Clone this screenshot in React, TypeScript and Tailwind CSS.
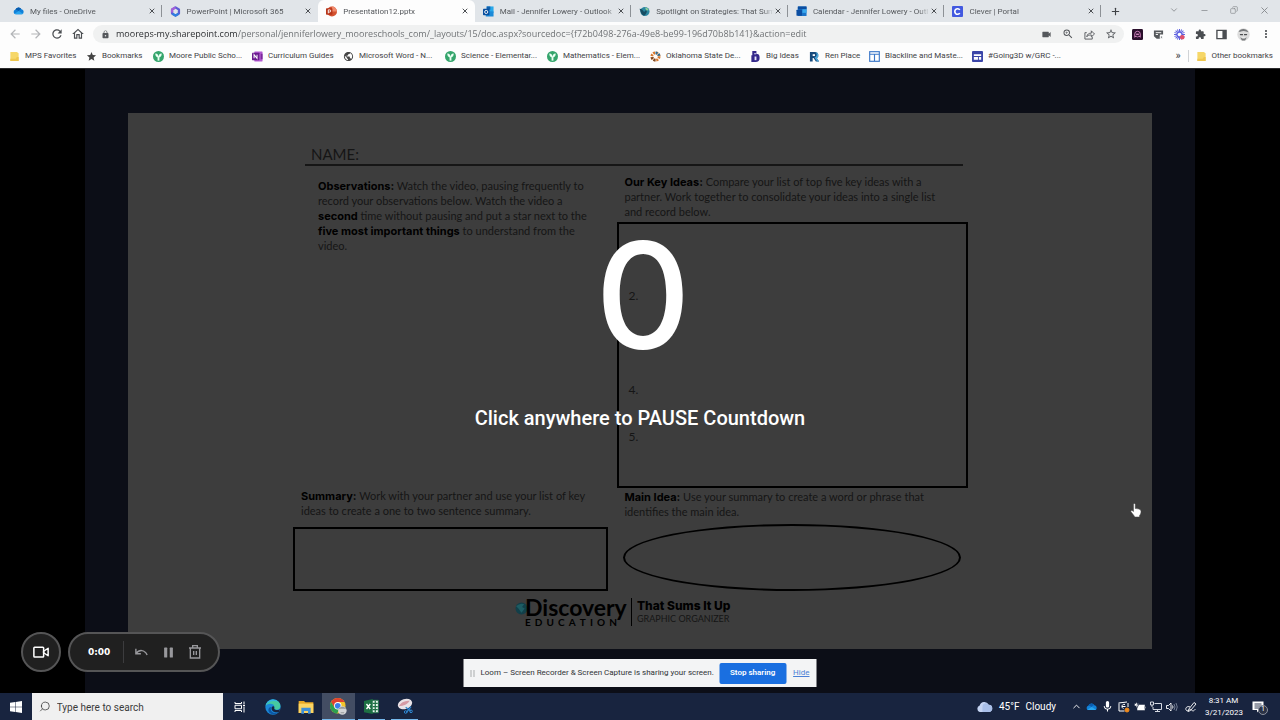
import React, { ReactNode } from "react";
import {
  MdArrowBack,
  MdArrowForward,
  MdRefresh,
  MdOutlineHome,
  MdLock,
  MdVideocam,
  MdZoomIn,
  MdStarBorder,
  MdStar,
  MdExtension,
  MdMoreVert,
  MdPublic,
  MdMic,
} from "react-icons/md";
import { ChevronDown, ChevronUp, Copy, Minus, Plus, Search, X } from "lucide-react";

const OneDrive = () => (
  <svg viewBox="0 0 24 16" className="w-full">
    <path d="M6 16a5 5 0 0 1-1-9.800A7.500 7.500 0 0 1 18.500 5 5.600 5.600 0 0 1 19 16z" fill="#1180d8" />
    <path d="M5 6.200A7.500 7.500 0 0 1 18.500 5c-3 0-4.500 1.500-6.500 3.500C9.500 6.800 7.500 6 5 6.200z" fill="#0a5cae" />
    <path d="M3 15l9.500-6.500L22 14.500a5 5 0 0 1-3 1.500H6a5 5 0 0 1-3-1z" fill="#29a5ee" />
  </svg>
);

const Office = () => (
  <svg viewBox="0 0 24 24" className="w-full">
    <path d="M12 3l7.500 4.500v9L12 21l-7.500-4.500v-9z" fill="none" stroke="#5b5fd6" strokeWidth="5" strokeLinejoin="round" />
    <path d="M4.500 14V7.500L12 3" fill="none" stroke="#a560d8" strokeWidth="5" strokeLinejoin="round" />
    <path d="M5.500 17l6.500 4 6.500-4" fill="none" stroke="#2f7fdf" strokeWidth="5" strokeLinejoin="round" />
  </svg>
);

const PowerPoint = () => (
  <svg viewBox="0 0 24 24" className="w-full">
    <circle cx="13" cy="12" r="11" fill="#d35230" />
    <path d="M13 1a11 11 0 0 1 11 11H13z" fill="#f08a6c" />
    <rect x="0" y="5" width="14" height="14" rx="1.500" fill="#b7351a" />
    <path d="M5 16V8.500h3a2.300 2.300 0 0 1 0 4.700H5" fill="none" stroke="#fff" strokeWidth="2" />
  </svg>
);

const Outlook = () => (
  <svg viewBox="0 0 24 24" className="w-full">
    <rect x="8" y="1" width="15" height="14" fill="#28a8ea" />
    <rect x="8" y="1" width="8" height="7" fill="#0f5fae" />
    <path d="M6 11l17 1v11H6z" fill="#1b8ad8" />
    <rect x="0" y="6" width="14" height="14" rx="1.500" fill="#0a4f9e" />
    <circle cx="7" cy="13" r="3.400" fill="none" stroke="#fff" strokeWidth="2" />
  </svg>
);

const Globe = () => (
  <svg viewBox="0 0 24 24" className="w-full">
    <circle cx="13" cy="12" r="10" fill="#2b86a0" />
    <path d="M1 6c5 0 8 3 10 7l6-6c1 6-1 11-6 14C5 20 4 12 1 6z" fill="#164d63" />
    <path d="M13 3c5 0 7 3 8 6l-5 1z" fill="#8ccf9a" />
  </svg>
);

const CalendarIcon = () => (
  <svg viewBox="0 0 24 24" className="w-full">
    <rect x="4" y="1" width="19" height="21" rx="1" fill="#1b74c9" />
    <path d="M4 1h19v6H4z" fill="#0b4da0" />
    <path d="M14 7h9v8h-9z" fill="#39a9ef" />
    <rect x="1" y="8" width="12" height="13" rx="1" fill="#0c4ea2" />
  </svg>
);

const Clever = () => (
  <svg viewBox="0 0 24 24" className="w-full">
    <rect width="24" height="24" rx="2" fill="#4259e0" />
    <path d="M17 8.500a6 6 0 1 0 0 7" fill="none" stroke="#fff" strokeWidth="3.500" />
  </svg>
);

const Folder = () => (
  <svg viewBox="0 0 24 24" className="w-full">
    <path d="M3 2h14l4 3v17H3z" fill="#f6d768" />
    <path d="M3 17h12l2-4h4v9H3z" fill="#eec64e" />
  </svg>
);

const Sprout = () => (
  <svg viewBox="0 0 24 24" className="w-full">
    <circle cx="12" cy="12" r="12" fill="#35a56c" />
    <path d="M12 21v-9" stroke="#e9fff2" strokeWidth="4" />
    <path d="M12 14C6.500 14 5 10 5 5.500c5 0 7 3.500 7 8.500zm0 0c0-5 2-8.500 7-8.500C19 10 17.500 14 12 14z" fill="#e9fff2" />
  </svg>
);

const OneNote = () => (
  <svg viewBox="0 0 24 24" className="w-full">
    <rect x="5" y="1" width="18" height="22" rx="1" fill="#b45ad2" />
    <rect x="19" y="6" width="4" height="12" fill="#7a2a9a" />
    <rect x="0" y="4" width="16" height="16" rx="1" fill="#6b1c8f" />
    <path d="M4.500 16V8l6.500 8V8" fill="none" stroke="#fff" strokeWidth="2.200" />
  </svg>
);

const Pinwheel = () => (
  <svg viewBox="0 0 24 24" className="w-full">
    <circle cx="12" cy="12" r="8" fill="none" stroke="#d9792e" strokeWidth="6" strokeDasharray="4.300 2" />
    <path d="M12 4a8 8 0 0 1 8 8" fill="none" stroke="#2f6f95" strokeWidth="6" strokeDasharray="4.300 2" />
    <path d="M12 20a8 8 0 0 1-8-8" fill="none" stroke="#7a4a2a" strokeWidth="6" strokeDasharray="4.300 2" />
  </svg>
);

const BigIdeas = () => (
  <svg viewBox="0 0 24 24" className="w-full">
    <path d="M5 0h9v7c5-1 7 2 7 8 0 6-3 9-9 9H3V9h2z" fill="#34288a" />
    <path d="M10 12h4v8h-4z" fill="#e8e6fa" />
    <circle cx="11" cy="6" r="1.800" fill="#e8e6fa" />
  </svg>
);

const RenPlace = () => (
  <svg viewBox="0 0 24 24" className="w-full">
    <path d="M2 2h12a7 7 0 0 1 3 13l5 8h-7l-5-8H8v8H2z" fill="#174a7c" />
    <path d="M14 2a7 7 0 0 1 3 13l5 8h-4l-6-9c6-2 6-8 2-12z" fill="#49a5d8" />
    <path d="M8 7h5v4H8z" fill="#fff" />
  </svg>
);

const Columns = () => (
  <svg viewBox="0 0 24 24" className="w-full">
    <rect x="1.500" y="1.500" width="21" height="21" fill="#fff" stroke="#3c78c8" strokeWidth="2.500" />
    <path d="M2 7h20M12 7v15" stroke="#3c78c8" strokeWidth="2.500" />
  </svg>
);

const Sites = () => (
  <svg viewBox="0 0 24 24" className="w-full">
    <rect width="24" height="24" rx="2" fill="#3b45a8" />
    <path d="M4 7h16v4H4zM4 13h9v6H4zM15 13h5v6h-5z" fill="#fff" />
  </svg>
);

type TabData = { title: string; icon: ReactNode; active?: boolean; divider?: boolean };

const tabs: TabData[] = [
  { title: "My files - OneDrive", icon: <OneDrive />, divider: true },
  { title: "PowerPoint | Microsoft 365", icon: <Office /> },
  { title: "Presentation12.pptx", icon: <PowerPoint />, active: true },
  { title: "Mail - Jennifer Lowery - Outlook", icon: <Outlook />, divider: true },
  { title: "Spotlight on Strategies: That Sum", icon: <Globe />, divider: true },
  { title: "Calendar - Jennifer Lowery - Outl", icon: <CalendarIcon />, divider: true },
  { title: "Clever | Portal", icon: <Clever />, divider: true },
];

const bookmarks: { label: string; icon: ReactNode; width: string }[] = [
  { label: "MPS Favorites", icon: <Folder />, width: "w-[77px]" },
  { label: "Bookmarks", icon: <MdStar className="size-full text-[#454545]" />, width: "w-[67px]" },
  { label: "Moore Public Scho...", icon: <Sprout />, width: "w-[99px]" },
  { label: "Curriculum Guides", icon: <OneNote />, width: "w-[91px]" },
  { label: "Microsoft Word - N...", icon: <MdPublic className="size-full text-[#454545]" />, width: "w-[102px]" },
  { label: "Science - Elementar...", icon: <Sprout />, width: "w-[102px]" },
  { label: "Mathematics - Elem...", icon: <Sprout />, width: "w-[103px]" },
  { label: "Oklahoma State De...", icon: <Pinwheel />, width: "w-[100px]" },
  { label: "Big Ideas", icon: <BigIdeas />, width: "w-[59px]" },
  { label: "Ren Place", icon: <RenPlace />, width: "w-[60px]" },
  { label: "Blackline and Maste...", icon: <Columns />, width: "w-[103px]" },
  { label: "#Going3D w/GRC -...", icon: <Sites />, width: "w-[100px]" },
];

function TabStrip() {
  return (
    <div className="flex h-[22px] bg-[#e1e5e9] pl-[5px]">
      <div role="tablist" className="flex min-w-0 flex-1">
        {tabs.map((t) => (
          <div
            key={t.title}
            className={
              t.active
                ? "flex min-w-0 flex-1 items-center rounded-t-md bg-[#fdfdfd] pl-[8px]"
                : "flex min-w-0 flex-1 items-center pl-[8px]"
            }
          >
            <button role="tab" aria-selected={!!t.active} className="flex min-w-0 flex-1 items-center gap-[6px]">
              <span className="flex w-[11px] shrink-0 items-center">{t.icon}</span>
              <span className="min-w-0 flex-1 overflow-hidden mask-r-from-90% pt-px text-left text-[8px] whitespace-nowrap text-[#55585c]">
                {t.title}
              </span>
            </button>
            <button aria-label={"Close " + t.title} className="shrink-0 text-[#4c4f53]">
              <X size={8} strokeWidth={3} />
            </button>
            <span className={t.divider ? "ml-[5px] h-3 w-px bg-[#8d9196]" : "ml-[5px] h-3 w-px"} />
          </div>
        ))}
      </div>
      <div className="flex w-[179px] items-center pr-[10px] pl-[9px] text-[#85898d]">
        <button aria-label="New tab" className="text-[#3f4246]">
          <Plus size={11} strokeWidth={2.5} />
        </button>
        <div className="ml-auto flex items-center gap-[21px] pb-[2px]">
          <button aria-label="Search tabs">
            <ChevronDown size={10} />
          </button>
          <button aria-label="Minimize">
            <Minus size={9} />
          </button>
          <button aria-label="Restore">
            <Copy size={8} className="-scale-x-100" />
          </button>
          <button aria-label="Close window">
            <X size={11} />
          </button>
        </div>
      </div>
    </div>
  );
}

function Toolbar() {
  return (
    <div className="flex h-6 items-center bg-[#fdfdfd] pr-[8px] pl-[8px]">
      <div className="flex gap-[7px] text-[#4b4e52]">
        <button aria-label="Back" className="text-[#b3b5b8]"><MdArrowBack size={14} /></button>
        <button aria-label="Forward" className="text-[#b3b5b8]"><MdArrowForward size={14} /></button>
        <button aria-label="Reload"><MdRefresh size={14} /></button>
        <button aria-label="Home"><MdOutlineHome size={14} /></button>
      </div>
      <div className="ml-[8px] flex h-[18px] flex-1 items-center rounded-full bg-[#f0f1f1] pr-[7px] pl-[8px] text-[#55585c]">
        <MdLock size={9} />
        <input
          aria-label="Address"
          readOnly
          value="mooreps-my.sharepoint.com/personal/jenniferlowery_mooreschools_com/_layouts/15/doc.aspx?sourcedoc={f72b0498-276a-49e8-be99-196d70b8b141}&action=edit"
          className="ml-[6px] min-w-0 flex-1 bg-[linear-gradient(to_right,#26282b_121px,#6a6d70_121px)] bg-clip-text font-['Open_Sans',sans-serif] text-[9px] text-transparent outline-none"
        />
        <div className="flex gap-[10px]">
          <button aria-label="Camera"><MdVideocam size={11} /></button>
          <button aria-label="Zoom"><MdZoomIn size={12} /></button>
          <button aria-label="Share">
            <svg viewBox="0 0 24 24" width="11" height="11" fill="none" stroke="currentColor" strokeWidth="2">
              <path d="M6 8H2v14h16v-5M6 17c1-6 5-8 10-8V4l7 7-7 6v-4c-5 0-8 1-10 4z" />
            </svg>
          </button>
          <button aria-label="Bookmark this page"><MdStarBorder size={12} /></button>
        </div>
      </div>
      <div className="ml-[8px] flex items-center gap-[10px] text-[#4b4e52]">
        <button aria-label="Kami">
          <svg viewBox="0 0 24 24" width="11" height="11">
            <rect width="24" height="24" rx="3" fill="#2b0f2c" />
            <path d="M6 18V11a6 6 0 0 1 12 0v7l-3-3-3 3-3-3z" fill="none" stroke="#d887c4" strokeWidth="2" />
            <path d="M9 10h6v3H9z" fill="#d887c4" />
          </svg>
        </button>
        <button aria-label="Reader">
          <svg viewBox="0 0 24 24" width="11" height="11">
            <path d="M2 3h20v9h-7v9H8L2 16z" fill="#56595c" />
            <path d="M6 8h12M6 12h5M16 15h5v6h-5z" stroke="#fff" strokeWidth="2" fill="#8d9093" />
          </svg>
        </button>
        <button aria-label="Loom">
          <svg viewBox="0 0 24 24" width="11" height="11">
            <path d="M12 0v24M0 12h24M3.500 3.500l17 17M20.500 3.500l-17 17M7.400 1l9.200 22M1 7.400l22 9.200M16.600 1L7.400 23M1 16.600l22-9.200" stroke="#5f62e0" strokeWidth="2.200" />
            <circle cx="12" cy="12" r="4" fill="#fff" />
            <circle cx="18" cy="18" r="5" fill="#e0506a" />
          </svg>
        </button>
        <button aria-label="Extensions"><MdExtension size={11} /></button>
        <button aria-label="Side panel">
          <svg viewBox="0 0 24 24" width="11" height="11">
            <path d="M2 3h20v18H2z" fill="none" stroke="currentColor" strokeWidth="3" />
            <path d="M14 3h8v18h-8z" fill="currentColor" />
          </svg>
        </button>
        <button aria-label="Profile">
          <svg viewBox="0 0 24 24" width="13" height="13">
            <circle cx="12" cy="12" r="11.500" fill="#dcdcdc" />
            <path d="M3 7C6 0 18 0 21 8l-3-1c-4-2-8-2-12 0z" fill="#77797b" />
            <path d="M5 11h6v2.500H6zM13 11h6l-1 2.500h-5z" fill="#4b4d4f" />
            <path d="M6 17c4 3 8 3 12 0l-3 6H9z" fill="#77797b" />
            <path d="M9 18h6" stroke="#f4f4f4" strokeWidth="1.500" />
          </svg>
        </button>
        <button aria-label="Menu"><MdMoreVert size={12} /></button>
      </div>
    </div>
  );
}

function BookmarkBar() {
  return (
    <nav aria-label="Bookmarks" className="flex h-[22px] items-center bg-[#fdfdfd] pr-[7px] pb-[2px] pl-[9px] text-[8px] whitespace-nowrap text-[#3f4246]">
      {bookmarks.map((b) => (
        <a key={b.label} href="#" className={"flex shrink-0 items-center gap-[5px] " + b.width}>
          <span className="flex size-[11px] shrink-0 items-center">{b.icon}</span>
          {b.label}
        </a>
      ))}
      <div className="ml-auto flex items-center">
        <button aria-label="More bookmarks" className="text-[11px]">»</button>
        <span className="mr-[7px] ml-[7px] h-3 w-px bg-[#d0d3d6]" />
        <a href="#" className="flex items-center gap-[5px]">
          <span className="flex size-[11px]"><Folder /></span>
          Other bookmarks
        </a>
      </div>
    </nav>
  );
}

const Lead = ({ children }: { children: ReactNode }) => (
  <b className="font-['Inter',sans-serif] leading-none font-bold text-black">{children}</b>
);

function Slide() {
  return (
    <section className="flex flex-1 flex-col bg-[#3d3d3d] pr-[184px] pl-[165px] font-['Lato',sans-serif] text-[11px] leading-[15px] text-[#151515]">
      <h1 className="mt-[31px] mr-[5px] ml-3 border-b-2 border-[#161616] pl-[6px] text-[15px] leading-5">NAME:</h1>
      <div className="grid grid-cols-[315fr_350fr] gap-x-[9px]">
        <p className="pt-3 pr-2 pl-[25px]">
          <Lead>Observations:</Lead> Watch the video, pausing frequently to
          <br />
          record your observations below. Watch the video a
          <br />
          <Lead>second</Lead> time without pausing and put a star next to the
          <br />
          <Lead>five most important things</Lead> to understand from the
          <br />
          video.
        </p>
        <div className="pt-2">
          <p className="pb-[3px] pl-[7px]">
            <Lead>Our Key Ideas:</Lead> Compare your list of top five key ideas with a
            <br />
            partner. Work together to consolidate your ideas into a single list
            <br />
            and record below.
          </p>
          <ol className="h-[266px] border-2 border-black pt-12 pl-[9px] text-[12px] leading-[47px]">
            <li className="mb-[47px]">2.</li>
            <li>4.</li>
            <li>5.</li>
          </ol>
        </div>
        <div>
          <p className="pl-2">
            <Lead>Summary:</Lead> Work with your partner and use your list of key
            <br />
            ideas to create a one to two sentence summary.
          </p>
          <div className="mt-[9px] h-[64px] border-2 border-black" />
        </div>
        <div className="pt-[1px] pr-[7px] pl-[6px]">
          <p className="pl-[1px]">
            <Lead>Main Idea:</Lead> Use your summary to create a word or phrase that
            <br />
            identifies the main idea.
          </p>
          <div className="mt-[5px] h-[67px] rounded-[50%] border-2 border-black" />
        </div>
      </div>
      <footer className="mt-[6px] ml-[222px] flex items-center">
        <svg viewBox="0 0 24 24" className="-mr-[3px] mb-2 size-[13px] shrink-0">
          <circle cx="12" cy="12" r="11" fill="#123f49" />
          <path d="M2 8c5-5 11-6 15-4l-4 5 5 3-6 8C8 16 8 12 2 8z" fill="#1d5c63" />
        </svg>
        <div className="w-[106px] text-black">
          <div className="text-[23px] leading-[20px] font-bold">Discovery</div>
          <div className="flex justify-between pr-[14px] text-[10px] leading-[10px] font-bold">
            {"EDUCATION".split("").map((c, i) => (
              <span key={i}>{c}</span>
            ))}
          </div>
        </div>
        <span className="h-7 w-px bg-black" />
        <div className="pl-[5px]">
          <div className="font-['Inter',sans-serif] text-[12px] leading-[14px] font-extrabold text-black">That Sums It Up</div>
          <div className="text-[9px] leading-[12px]">GRAPHIC ORGANIZER</div>
        </div>
      </footer>
    </section>
  );
}

function RecorderControls() {
  return (
    <div className="absolute bottom-[21px] left-[21px] flex gap-[7px]">
      <button aria-label="Camera" className="flex size-10 items-center justify-center rounded-full border-2 border-[#555556] bg-[#202020] text-white">
        <svg viewBox="0 0 24 24" width="18" height="18" fill="none" stroke="currentColor" strokeWidth="2">
          <rect x="2.500" y="5.500" width="13" height="13" rx="1" />
          <path d="M15.500 11l6-4v10l-6-4z" strokeLinejoin="round" />
        </svg>
      </button>
      <div className="flex h-10 w-[152px] items-center rounded-full border-2 border-[#555556] bg-[#202020] pl-[18px] text-[#98989c]">
        <span className="w-[35px] pt-[2px] font-['DejaVu_Sans',sans-serif] text-[9px] font-bold text-white">0:00</span>
        <span className="h-[22px] w-px bg-[#3c3c3e]" />
        <button aria-label="Restart" className="ml-[10px]">
          <svg viewBox="0 0 24 24" width="15" height="15" fill="none" stroke="currentColor" strokeWidth="2.200">
            <path d="M3 6v8h8M3.500 13.500C8 7 17 7 21 16" />
          </svg>
        </button>
        <button aria-label="Pause" className="ml-[12px]">
          <svg viewBox="0 0 24 24" width="15" height="15" fill="currentColor">
            <rect x="5" y="4" width="5" height="16" rx="1" />
            <rect x="14" y="4" width="5" height="16" rx="1" />
          </svg>
        </button>
        <button aria-label="Delete" className="ml-[11px]">
          <svg viewBox="0 0 24 24" width="16" height="16" fill="none" stroke="currentColor" strokeWidth="2">
            <path d="M3 6h18M8.500 6V2.500h7V6M5 6v15h14V6M10 10.500v6M14 10.500v6" />
          </svg>
        </button>
      </div>
    </div>
  );
}

function SharingBar() {
  return (
    <div className="absolute bottom-[6px] left-1/2 flex h-7 w-[353px] -translate-x-1/2 items-center bg-[#f3f4f5] pr-[7px] pl-[7px] text-[8px] whitespace-nowrap text-[#303336]">
      <span className="h-[7px] w-[4px] border-x border-[#a9abad]" />
      <span className="ml-[6px] flex-1">Loom – Screen Recorder &amp; Screen Capture is sharing your screen.</span>
      <button className="h-[21px] w-[67px] rounded-xs bg-[#1a6fe0] font-semibold text-white">Stop sharing</button>
      <a href="#" className="ml-[7px] text-[#4a7fd6] underline">Hide</a>
    </div>
  );
}

function Stage() {
  return (
    <main className="relative flex flex-1 border-t border-[#2b2b2d] bg-black px-[85px]">
      <div className="flex flex-1 flex-col bg-[#0c0e17] px-[43px] pt-11 pb-11">
        <Slide />
      </div>
      <button className="absolute inset-0 flex flex-col items-center pt-[153px] text-white">
        <span className="pl-[6px] font-['Inter',sans-serif] text-[148px] leading-[148px] font-medium">0</span>
        <span className="mt-[36px] font-['Roboto',sans-serif] text-[20px] leading-6 font-medium">
          Click anywhere to PAUSE Countdown
        </span>
      </button>
      <RecorderControls />
      <SharingBar />
      <svg viewBox="0 0 24 30" className="absolute top-[434px] right-[138px] h-[15px] w-3">
        <path
          d="M7 2.500C7 .5 10.500.5 10.500 2.500V11c4 .3 11 1 11.500 5 .2 4-1 7-3 9v3H9.500C8 24 3 20 1.500 16.500c0-2 3-2 5.500.5z"
          fill="#fff"
          stroke="#444"
          strokeWidth="1"
        />
      </svg>
    </main>
  );
}

function TaskButton({ label, active, running, children }: { label: string; active?: boolean; running?: boolean; children: ReactNode }) {
  return (
    <button
      aria-label={label}
      className={
        active
          ? "flex w-[33px] items-center justify-center border-b border-[#76b9ed] bg-[#434d63]"
          : running
            ? "flex w-[33px] items-center justify-center px-[3px]"
            : "flex w-[33px] items-center justify-center"
      }
    >
      {running ? (
        <span className="flex h-full flex-1 items-center justify-center border-b border-[#76b9ed]">{children}</span>
      ) : (
        children
      )}
    </button>
  );
}

function Taskbar() {
  return (
    <footer className="flex h-[27px] bg-[#18243f] text-white">
      <button aria-label="Start" className="flex w-8 items-center justify-center">
        <svg viewBox="0 0 24 24" width="12" height="12" fill="#fff">
          <path d="M0 3.500l10.500-1.500v9.500H0zM11.500 1.900L24 0v11.500H11.500zM0 12.500h10.500V22L0 20.500zM11.500 12.500H24V24l-12.500-1.800z" />
        </svg>
      </button>
      <label className="flex w-[191px] items-center bg-[#f0f0f0] pl-[7px] text-[#333]">
        <Search size={13} strokeWidth={1.5} className="-scale-x-100" />
        <input
          aria-label="Search"
          placeholder="Type here to search"
          className="ml-[6px] w-full min-w-0 pt-px text-[10px] outline-none placeholder:text-[#3b3b3b]"
        />
      </label>
      <TaskButton label="Task view">
        <svg viewBox="0 0 24 24" width="12" height="12" fill="none" stroke="#fff" strokeWidth="2">
          <path d="M2 2v3h13V2M2 22v-3h13v3M2 8.500h13v7H2zM20 1v6M20 11v12M18 9h4" />
        </svg>
      </TaskButton>
      <TaskButton label="Edge">
        <svg viewBox="0 0 24 24" width="16" height="16">
          <circle cx="12" cy="12" r="11.500" fill="#1b88d8" />
          <path d="M1 10C3 1 15-2 21 5c4 5 2 11-4 11-4 0-3-2-3-4 0-6-9-6-13-2z" fill="#46c9a0" />
          <path d="M1 10C3 1 14-2 20 4c-6-2-15-1-19 6z" fill="#35b4e0" />
          <path d="M9 12c-2 6 3 11 11 8-5 5-14 4-15-3 0-4 2-5 4-5z" fill="#0c57a4" />
          <path d="M14 12c0 2-1 4 3 4.500 3 .3 5-1 6-2l-2 5c-8 2-12-2-11-7 1-2 4-2 4-.5z" fill="#18243f" />
        </svg>
      </TaskButton>
      <TaskButton label="File Explorer">
        <svg viewBox="0 0 24 24" width="16" height="16">
          <path d="M1 3h8l2 2h12v16H1z" fill="#e9a926" />
          <path d="M1 7h22v14H1z" fill="#fcd462" />
          <path d="M5 13h14v9h-4v-4H9v4H5z" fill="#3f8fd6" />
        </svg>
      </TaskButton>
      <TaskButton label="Chrome" active>
        <svg viewBox="0 0 24 24" width="17" height="17">
          <circle cx="11" cy="11" r="11" fill="#f5c42c" />
          <path d="M1.500 5.500A11 11 0 0 1 20.500 5.500H11L6 13z" fill="#e0412f" />
          <path d="M1.500 5.500A11 11 0 0 0 10 22l5-9-4 3-5-3z" fill="#2ea04f" />
          <circle cx="11" cy="11" r="5.200" fill="#fff" />
          <circle cx="11" cy="11" r="4" fill="#3b7ee8" />
          <circle cx="17.500" cy="17.500" r="6" fill="#d3d5d7" />
          <path d="M12 16c2-5 9-5 11 0l-3-1h-5zM15 20h5v1.500h-5z" fill="#96999c" />
        </svg>
      </TaskButton>
      <TaskButton label="Excel" running>
        <svg viewBox="0 0 24 24" width="15" height="15">
          <path d="M12 2h11v20H12z" fill="#e9f5ee" stroke="#1d7044" strokeWidth="1.500" />
          <path d="M14 7h8M14 12h8M14 17h8M18 3v18" stroke="#1d7044" strokeWidth="2" />
          <path d="M0 3l14-3v24L0 21z" fill="#1d7044" />
          <path d="M4 8l6 8M10 8l-6 8" stroke="#fff" strokeWidth="2.200" />
        </svg>
      </TaskButton>
      <TaskButton label="Snipping Tool" running>
        <svg viewBox="0 0 24 24" width="16" height="16">
          <ellipse cx="12" cy="9" rx="11" ry="7.500" fill="#e9e2e6" transform="rotate(-18 12 9)" />
          <path d="M3 12c4-7 10-8 16-8-3 5-9 8-16 8z" fill="#d59aa4" />
          <path d="M13 14l8 6M21 13l-7 9" stroke="#2f86d0" strokeWidth="2" />
          <circle cx="13" cy="21" r="2" fill="none" stroke="#2f86d0" strokeWidth="1.500" />
          <circle cx="21" cy="20" r="2" fill="none" stroke="#2f86d0" strokeWidth="1.500" />
        </svg>
      </TaskButton>

      <div className="ml-auto flex items-center">
        <button className="mr-[15px] flex items-center text-[10px] whitespace-nowrap">
          <svg viewBox="0 0 24 16" width="17" height="11" className="mr-[6px]">
            <path d="M5 16a5 5 0 0 1 0-9.500A7 7 0 0 1 18 5.500 5.300 5.300 0 0 1 19 16z" fill="#c5d4f3" />
            <path d="M9 9a5 5 0 0 1 9-3.500A5.300 5.300 0 0 1 19 16H9z" fill="#a9bfe9" />
          </svg>
          45°F<span className="ml-[6px]">Cloudy</span>
        </button>
        <div className="flex items-center gap-[4px]">
          <button aria-label="Show hidden icons"><ChevronUp size={11} /></button>
          <span className="w-[11px]"><OneDrive /></span>
          <MdMic size={13} />
          <svg viewBox="0 0 24 24" width="12" height="12" fill="none" stroke="#fff" strokeWidth="2">
            <path d="M1 4l17-2M2 5v15h11M20 4v8M14 7c-7-2-8 7-3 8M8 11h7" />
            <circle cx="18" cy="18" r="4" fill="#f08a1c" stroke="#f08a1c" />
          </svg>
          <svg viewBox="0 0 24 24" width="12" height="12" fill="#fff">
            <path d="M6 7h16v12H6zM22 11h2v4h-2zM1 5h3V3h2v2h3v5H7v3H4V10H1z" stroke="#18243f" />
          </svg>
          <svg viewBox="0 0 24 24" width="12" height="12" fill="none" stroke="#d5d9e2" strokeWidth="2">
            <path d="M9 5h14v12H6v-5M15 17v4M10 21h10M1 2h6v6H1zM4 8v4" />
          </svg>
          <svg viewBox="0 0 24 24" width="12" height="12" fill="none" stroke="#fff" strokeWidth="1.800">
            <path d="M1 9h4l5-5v16l-5-5H1zM13 9q2 3 0 6" />
            <path d="M16 6q4 6 0 12M20 4q5 8 0 16" stroke="#7d879b" />
          </svg>
        </div>
        <svg viewBox="0 0 24 24" width="12" height="12" className="ml-[7px]" fill="none" stroke="#fff" strokeWidth="1.800">
          <path d="M7 17L18 3l4 3L11 19l-5 2zM10 12c-6-3-11 3-7 7 4 3 6-5 10-1s6 0 8-2" />
        </svg>
        <div className="ml-[8px] w-[37px] text-center text-[8px] leading-[12px] whitespace-nowrap">
          <div>8:31 AM</div>
          <div>3/21/2023</div>
        </div>
        <button aria-label="Notifications" className="relative mr-[16px] ml-[10px]">
          <svg viewBox="0 0 24 24" width="12" height="12">
            <path d="M1 1h22v17h-9l-4 5v-5H1z" fill="#fff" />
            <path d="M5 6h14M5 10h14M5 14h9" stroke="#18243f" strokeWidth="1.800" />
          </svg>
          <span className="absolute top-[4px] left-[6px] flex size-[10px] items-center justify-center rounded-full border border-[#8b919e] bg-[#2b3245] text-[7px] leading-none">
            1
          </span>
        </button>
      </div>
    </footer>
  );
}

export default function App() {
  return (
    <div className="flex min-h-screen flex-col font-['Roboto','Noto_Sans',sans-serif]">
      <header>
        <TabStrip />
        <Toolbar />
        <BookmarkBar />
      </header>
      <Stage />
      <Taskbar />
    </div>
  );
}
